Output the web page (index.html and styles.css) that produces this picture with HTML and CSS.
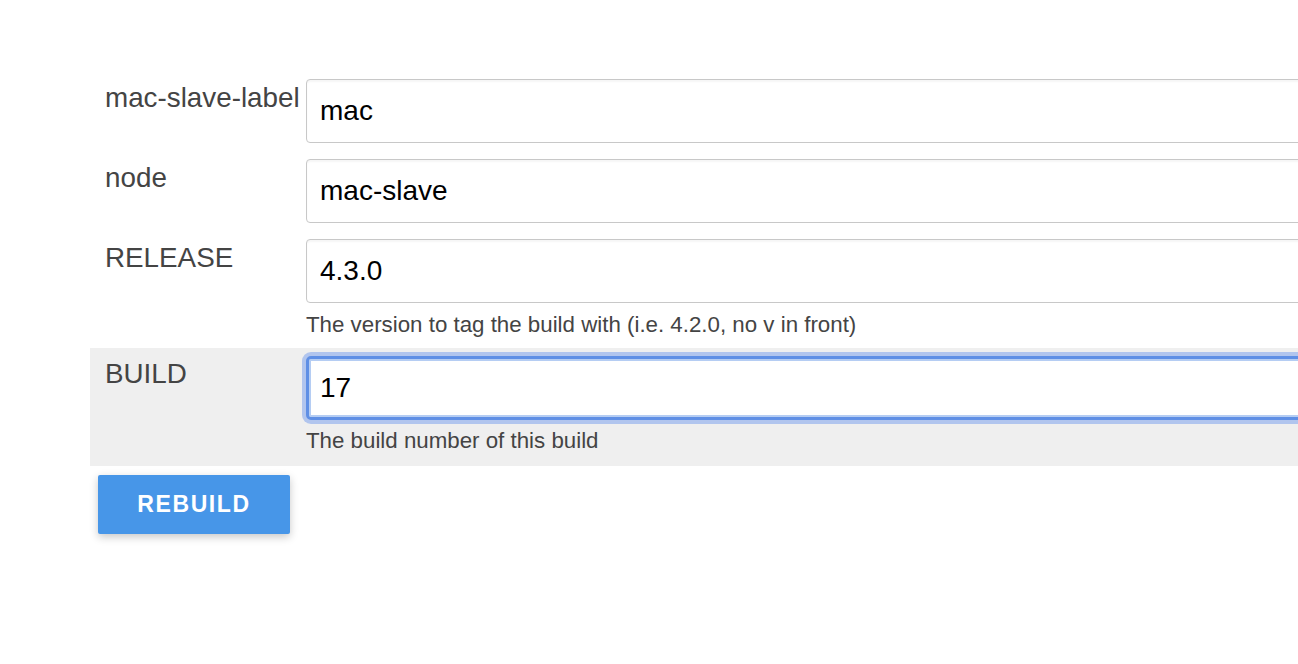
FILE: index.html
```html
<!DOCTYPE html>
<html>
<head>
<meta charset="utf-8">
<link rel="stylesheet" href="styles.css">
</head>
<body>
<form class="form">
  <div class="row">
    <div class="label">mac-slave-label</div>
    <div class="field"><input class="input" type="text" value="mac"></div>
  </div>
  <div class="row">
    <div class="label">node</div>
    <div class="field"><input class="input" type="text" value="mac-slave"></div>
  </div>
  <div class="row row-help">
    <div class="label">RELEASE</div>
    <div class="field">
      <input class="input" type="text" value="4.3.0">
      <div class="help">The version to tag the build with (i.e. 4.2.0, no v in front)</div>
    </div>
  </div>
  <div class="row row-help row-active">
    <div class="label">BUILD</div>
    <div class="field">
      <input class="input input-focus" type="text" value="17">
      <div class="help">The build number of this build</div>
    </div>
  </div>
  <button class="btn" type="button">REBUILD</button>
</form>
</body>
</html>
```
FILE: styles.css
```css
html, body {
  margin: 0;
  padding: 0;
  overflow: hidden;
  background: #ffffff;
}
body {
  font-family: "Liberation Sans", Arial, sans-serif;
  height: 664px;
}
.form {
  margin: 75px 0 0 90px;
  width: 1400px;
}
.row {
  display: flex;
  padding: 4px 0 12px 0;
}
.label {
  width: 201px;
  flex: none;
  padding: 3px 0 0 15px;
  font-size: 27.8px;
  line-height: 32px;
  color: #444444;
  white-space: nowrap;
}
.field {
  flex: 1;
  display: flex;
  flex-direction: column;
}
.input {
  box-sizing: border-box;
  height: 64px;
  width: 100%;
  margin: 0;
  padding: 0 13px;
  border: 1px solid #c8c8c8;
  border-radius: 4px;
  box-shadow: inset 0 2px 2px rgba(0, 0, 0, 0.04);
  font-family: "Liberation Sans", Arial, sans-serif;
  font-size: 28px;
  color: #000000;
  background: #ffffff;
  outline: none;
}
.help {
  margin-top: 9px;
  font-size: 22.3px;
  line-height: 26px;
  color: #444444;
  white-space: nowrap;
}
.row-help {
  padding-bottom: 10px;
}
.row-active {
  background: #efefef;
  padding-top: 8px;
  padding-bottom: 12px;
}
.row-active .label {
  padding-top: 2px;
}
.input-focus {
  border: 3px solid #5f8fe5;
  border-radius: 5px;
  padding-left: 11px;
  box-shadow: 0 0 0 4px rgba(125, 163, 236, 0.55), inset 0 0 0 2px #b5cdf3;
}
.row-active .help {
  margin-top: 8px;
}
.btn {
  display: block;
  margin: 9px 0 0 8px;
  width: 192px;
  height: 59px;
  border: none;
  border-radius: 2px;
  background: #4796e8;
  color: #ffffff;
  font-family: "Liberation Sans", Arial, sans-serif;
  font-weight: bold;
  font-size: 23px;
  letter-spacing: 1.6px;
  box-shadow: 0 3px 8px rgba(0, 0, 0, 0.22);
  cursor: pointer;
}
```
